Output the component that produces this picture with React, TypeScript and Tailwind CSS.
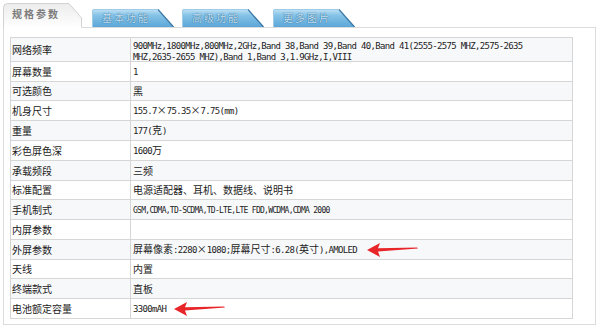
import React from "react";

type Row = { label: string; value?: string; lines?: string[]; small?: boolean; arrow?: boolean };

const rows: Row[] = [
  {
    label: "网络频率",
    lines: [
      "900MHz,1800MHz,800MHz,2GHz,Band 38,Band 39,Band 40,Band 41(2555-2575 MHZ,2575-2635",
      "MHZ,2635-2655 MHZ),Band 1,Band 3,1.9GHz,I,VIII",
    ],
  },
  { label: "屏幕数量", value: "1" },
  { label: "可选颜色", value: "黑" },
  { label: "机身尺寸", value: "155.7×75.35×7.75(mm)" },
  { label: "重量", value: "177(克)" },
  { label: "彩色屏色深", value: "1600万" },
  { label: "承载频段", value: "三频" },
  { label: "标准配置", value: "电源适配器、耳机、数据线、说明书" },
  { label: "手机制式", value: "GSM,CDMA,TD-SCDMA,TD-LTE,LTE FDD,WCDMA,CDMA 2000", small: true },
  { label: "内屏参数", value: "" },
  { label: "外屏参数", value: "屏幕像素:2280×1080;屏幕尺寸:6.28(英寸),AMOLED", arrow: true },
  { label: "天线", value: "内置" },
  { label: "终端款式", value: "直板" },
  { label: "电池额定容量", value: "3300mAH", arrow: true },
];

const heights = [20, 19, 20, 20, 20, 20, 19, 20, 20, 20, 19, 20, 20];

function Mixed({ text, small }: { text: string; small?: boolean }) {
  const parts = text.match(/[\x20-\x7e]+|[^\x20-\x7e]+/g) || [];
  return (
    <>
      {parts.map((p, i) =>
        /[\x20-\x7e]/.test(p[0]) ? (
          <span
            key={i}
            className={
              small
                ? "font-['DejaVu_Sans_Mono',monospace] text-[8px] tracking-[-0.72px]"
                : "font-['DejaVu_Sans_Mono',monospace] text-[9px] tracking-[-0.67px]"
            }
          >
            {p}
          </span>
        ) : (
          <span key={i} className="text-[10px]">
            {p}
          </span>
        )
      )}
    </>
  );
}

function Arrow() {
  return (
    <svg width="52" height="15" viewBox="0 0 52 15" className="shrink-0">
      <path d="M0 8 L13 1 L11 6.3 L50 5.6 L51 6.6 L11 9.6 L13 15 Z" fill="#e8262a" />
    </svg>
  );
}

function InactiveTab({ label, ml }: { label: string; ml: string }) {
  return (
    <div className={`relative h-[18px] w-[82px] shrink-0 ${ml}`}>
      <svg width="82" height="18" viewBox="0 0 82 18" className="absolute inset-0">
        <defs>
          <linearGradient id={`g-${label}`} x1="0" y1="0" x2="0" y2="1">
            <stop offset="0" stopColor="#c3e3f5" />
            <stop offset="0.35" stopColor="#86c3e7" />
            <stop offset="1" stopColor="#5ba6d8" />
          </linearGradient>
        </defs>
        <path d="M0 18 V2 Q0 0 2 0 H66 L82 18 Z" fill={`url(#g-${label})`} />
        <path d="M66 0.5 L81.5 18" stroke="#3d77a5" strokeWidth="1.2" fill="none" />
        <path d="M0.5 18 V2 Q0.5 0.5 2 0.5 H66" stroke="#9fcbe6" strokeWidth="1" fill="none" />
      </svg>
      <div className="relative flex h-full items-center pl-[10px] text-[10px] leading-none tracking-[2px] text-[#c6e2f4] [text-shadow:0_0_1px_#2d6b98,0_0_1px_#2d6b98]">
        {label}
      </div>
    </div>
  );
}

export default function App() {
  return (
    <div className="h-[328px] w-[600px] overflow-hidden bg-white font-['Noto_Sans_CJK_SC',sans-serif] text-[10px] text-[#1e1e1e]">
      {/* tabs */}
      <div className="ml-[3px] flex h-[28px] w-[593px] items-end">
        <div className="relative h-[25px] w-[79px] shrink-0">
          <svg width="79" height="25" viewBox="0 0 79 25" className="absolute inset-0">
            <defs>
              <linearGradient id="act" x1="0" y1="0" x2="0" y2="1">
                <stop offset="0" stopColor="#ececec" />
                <stop offset="1" stopColor="#ffffff" />
              </linearGradient>
            </defs>
            <path d="M0.5 25 V4.5 Q0.5 0.5 4.5 0.5 H66 L78.5 15 V25 Z" fill="url(#act)" />
            <path
              d="M0.5 25 V4.5 Q0.5 0.5 4.5 0.5 H66 L78.5 15 V24.5"
              fill="none"
              stroke="#d2d2d2"
              strokeWidth="1"
            />
          </svg>
          <div className="relative flex h-[21px] items-center pl-[9px] text-[10px] font-bold leading-none tracking-[2px] text-[#7b7b7b]">
            规格参数
          </div>
        </div>
        <div className="flex h-full flex-1 items-end border-b border-[#dcdcdc]">
          <InactiveTab label="基本功能" ml="ml-[10px]" />
          <InactiveTab label="高级功能" ml="ml-[8px]" />
          <InactiveTab label="更多图片" ml="ml-[9px]" />
        </div>
      </div>

      {/* panel */}
      <div className="ml-[3px] w-[593px] border-x border-b border-[#dcdcdc] pb-[5px] pl-[6px] pt-[9px]">
        <div className="w-[563px] border-x border-t border-[#d6d6d6]">
          {rows.map((r, i) => {
            const bg = i % 2 === 0 ? "bg-[#f7f8fa]" : "bg-white";
            const h = i === 0 ? "h-[24px]" : heights[i - 1] === 20 ? "h-[20px]" : "h-[19px]";
            return (
              <div key={r.label} className={`flex border-b border-[#d6d6d6] ${h} ${bg}`}>
                <div className="flex w-[120px] shrink-0 items-center border-r border-[#d6d6d6] pl-[1px] text-[10px] leading-[12px] text-[#1a1a1a]">
                  {r.label}
                </div>
                <div className="flex flex-1 items-center pl-[2px] text-[10px] leading-[12px] text-[#222]">
                  {r.lines ? (
                    <div className="flex flex-col pt-[1px]">
                      {r.lines.map((l, j) => (
                        <div key={j} className="h-[11px] whitespace-pre text-[10px] leading-[11px]">
                          <Mixed text={l} />
                        </div>
                      ))}
                    </div>
                  ) : (
                    <div className="flex items-center">
                      <span className="whitespace-pre">
                        <Mixed text={r.value || ""} small={r.small} />
                      </span>
                      {r.arrow && (
                        <span className={i === 13 ? "ml-[8px] flex" : "ml-[10px] flex"}>
                          <Arrow />
                        </span>
                      )}
                    </div>
                  )}
                </div>
              </div>
            );
          })}
        </div>
      </div>
    </div>
  );
}
